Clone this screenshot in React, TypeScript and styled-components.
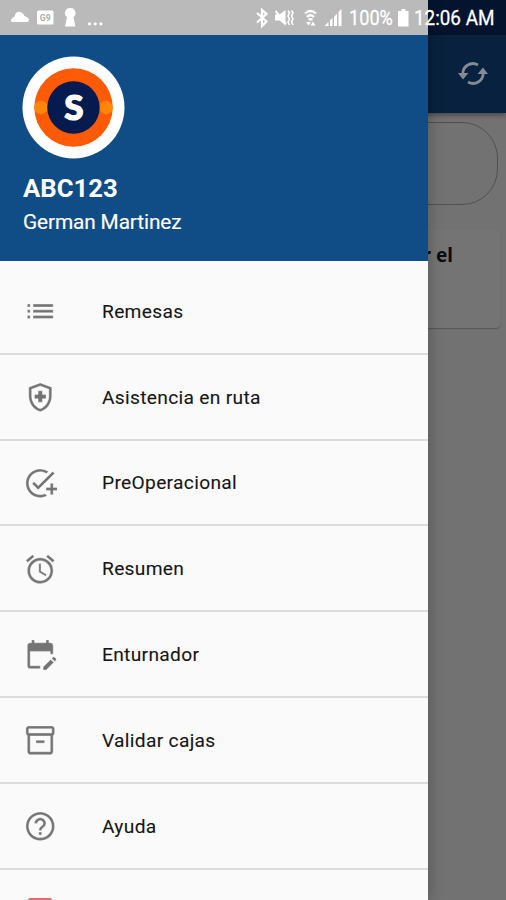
import React from "react";
import styled, { createGlobalStyle } from "styled-components";
import {
  MdList,
  MdOutlineHealthAndSafety,
  MdAddTask,
  MdAlarm,
  MdEditCalendar,
  MdOutlineInventory2,
  MdHelpOutline,
} from "react-icons/md";

const GlobalStyle = createGlobalStyle`
  * { box-sizing: border-box; }
  body { margin: 0; font-family: Roboto, sans-serif; }
`;

const Screen = styled.div`
  position: relative;
  width: 506px;
  height: 900px;
  overflow: hidden;
  background: #727272;
`;

const Page = styled.div`
  display: flex;
  flex-direction: column;
`;

const PageTop = styled.div`
  height: 35px;
  background: #04142f;
`;

const Toolbar = styled.header`
  display: flex;
  align-items: center;
  justify-content: flex-end;
  height: 78px;
  padding: 0 18px 0 0;
  background: #07213f;
  box-shadow: 0 2px 5px rgba(0, 0, 0, 0.4);
`;

const SearchBox = styled.div`
  height: 83px;
  margin: 9px 8px 0;
  border: 1px solid #505050;
  border-radius: 36px;
`;

const Card = styled.div`
  height: 98px;
  margin: 25px 6px 0;
  padding: 11px 47px 0 0;
  border-radius: 4px;
  background: #747474;
  box-shadow: 0 1px 1px #555;
  color: #0c0c0c;
  text-align: right;
  font: 700 19px/28px "Noto Sans", sans-serif;
`;

const Drawer = styled.aside`
  position: absolute;
  top: 0;
  left: 0;
  display: flex;
  flex-direction: column;
  width: 428px;
  height: 900px;
  background: #fafafa;
  box-shadow: 0 0 14px rgba(0, 0, 0, 0.28);
`;

const Profile = styled.div`
  height: 261px;
  flex: none;
  padding: 56px 0 0 22px;
  background: #104c86;
  color: #fff;
`;

const Avatar = styled.svg`
  display: block;
  width: 103px;
  height: 103px;
`;

const Plate = styled.div`
  margin: 14px 0 0 1px;
  font-size: 25.7px;
  line-height: 30px;
  font-weight: 700;
`;

const Driver = styled.div`
  margin: 6px 0 0 1px;
  font-size: 20.8px;
  letter-spacing: -0.12px;
  line-height: 26px;
  -webkit-text-stroke: 0.15px #fff;
`;

const Menu = styled.nav`
  padding-top: 8px;
`;

const MenuItem = styled.div`
  display: flex;
  align-items: center;
  height: 85.8px;
  padding: 2px 0 0 22.5px;
  border-bottom: 2px solid #dcdcdc;
  color: #161616;
  font-size: 19.2px;
  letter-spacing: 0.31px;
  line-height: 24px;
  -webkit-text-stroke: 0.1px #161616;

  svg {
    width: 34.5px;
    height: 34.5px;
    margin: -1px 45px 0 0;
    color: #747474;
    stroke: #fafafa;
    stroke-width: 0.25px;
  }
`;

const ExitItem = styled.div`
  display: flex;
  padding: 28.5px 0 0 28px;
`;

const ExitIcon = styled.svg`
  width: 24px;
  height: 24px;
`;

const StatusBar = styled.div`
  position: absolute;
  inset: 0 0 auto 0;
  display: flex;
  align-items: center;
  height: 35px;
  color: #fff;
  background: linear-gradient(90deg, #bababa 428px, transparent 428px);
`;

const StatusIcons = styled.svg`
  flex: none;
  width: 349px;
  height: 35px;
`;

const StatusText = styled.span<{ $width: number; $scale: number }>`
  flex: none;
  width: ${(p) => p.$width}px;
  padding-top: 1px;
  font-size: 20.5px;
  line-height: 24px;
  white-space: nowrap;
  transform: scaleX(${(p) => p.$scale});
  transform-origin: left center;
  -webkit-text-stroke: 0.3px #fff;
`;

const Battery = styled.svg`
  flex: none;
  width: 17px;
  height: 35px;
`;

const items = [
  { label: "Remesas", Icon: MdList },
  { label: "Asistencia en ruta", Icon: MdOutlineHealthAndSafety },
  { label: "PreOperacional", Icon: MdAddTask },
  { label: "Resumen", Icon: MdAlarm },
  { label: "Enturnador", Icon: MdEditCalendar },
  { label: "Validar cajas", Icon: MdOutlineInventory2 },
  { label: "Ayuda", Icon: MdHelpOutline },
];

export default function App() {
  return (
    <Screen>
      <GlobalStyle />
      <Page>
        <PageTop />
        <Toolbar>
          <svg width="30" height="24" viewBox="458 62 30 24" fill="none">
            <path d="M463 75a10 10 0 0 1 15-10M483 72a10 10 0 0 1-15 10" stroke="#858b93" strokeWidth="2.8" />
            <path d="M458 73h10.500l-5.500 6.500zM477.500 74h10.500l-5-6.500z" fill="#858b93" />
          </svg>
        </Toolbar>
        <SearchBox />
        <Card>r el</Card>
      </Page>

      <Drawer>
        <Profile>
          <Avatar viewBox="0 0 103 103">
            <circle cx="51.5" cy="51.5" r="51" fill="#fff" />
            <circle cx="51.5" cy="51.5" r="39.200" fill="#ff5a05" />
            <circle cx="19" cy="51.5" r="6.800" fill="#ff8608" />
            <circle cx="84" cy="51.5" r="6.800" fill="#ff8608" />
            <circle cx="51.500" cy="51.5" r="26.200" fill="#051b50" />
            <text x="52" y="63.5" textAnchor="middle" fill="#fff" stroke="#fff" strokeWidth="1.2" strokeLinejoin="round" fontFamily="Lato, sans-serif" fontWeight="900" fontSize="35">S</text>
          </Avatar>
          <Plate>ABC123</Plate>
          <Driver>German Martinez</Driver>
        </Profile>
        <Menu>
          {items.map(({ label, Icon }) => (
            <MenuItem key={label}>
              <Icon />
              {label}
            </MenuItem>
          ))}
          <ExitItem>
            <ExitIcon viewBox="0 0 24 24">
              <rect width="24" height="24" rx="2" fill="#e26b70" />
            </ExitIcon>
          </ExitItem>
        </Menu>
      </Drawer>

      <StatusBar>
        <StatusIcons viewBox="0 0 349 35" fill="#fff">
          <path d="M12 22q-2-1-.500-3 1-2 3-2 1-6 6-5 3 1 4 4 4 1 4.500 4 0 2-2 2z" />
          <rect x="37" y="10.500" width="16.500" height="14" rx="1.500" />
          <text x="45.200" y="20.500" textAnchor="middle" fill="#aaa" fontFamily="Roboto, sans-serif" fontWeight="700" fontSize="8.500">G9</text>
          <path d="M70.500 8a5 5 0 0 1 3 9l2 9.500h-10.500l2-9.500a5 5 0 0 1 3.500-9z" />
          <circle cx="89.500" cy="23.800" r="1.600" />
          <circle cx="95.200" cy="23.800" r="1.600" />
          <circle cx="100.900" cy="23.800" r="1.600" />
          <path d="M257 13l9.500 8.500-4.500 4.500V10l4.500 4-9.500 8.500" fill="none" stroke="#fff" strokeWidth="2.200" />
          <path d="M275 14.500h4.500l6-4.500v15.500l-6-5h-4.500z" />
          <path d="M275.500 11l10.500 13" stroke="#fff" strokeWidth="2" />
          <path d="M288 10.500l1.500 2.500-1.500 3 1.500 3-1.500 3 1.500 3M291.500 10.500l1.500 2.500-1.500 3 1.500 3-1.500 3 1.500 3" fill="none" stroke="#fff" strokeWidth="1.600" />
          <path d="M305 13.500q5.500-5 11 0M307 17q3.500-3.500 7 0" fill="none" stroke="#fff" strokeWidth="2.300" />
          <path d="M308.500 18h4v2.500h-4zM308.500 25.500l-2.500-3.500h5zM313 21.500l2.500 4h-5z" />
          <path d="M324.500 26l4-4v4zM330 20.500l2.500-2.500v8H330zM334 17l3-3.500V26h-3zM338.500 12l3-3v17h-3z" />
        </StatusIcons>
        <StatusText $width={48} $scale={0.885}>100%</StatusText>
        <Battery viewBox="397 0 17 35" fill="#fff">
          <path d="M401.500 9h4v2h3v15.500h-10.500V11h3.500z" />
        </Battery>
        <StatusText $width={80} $scale={0.92}>12:06 AM</StatusText>
      </StatusBar>
    </Screen>
  );
}
